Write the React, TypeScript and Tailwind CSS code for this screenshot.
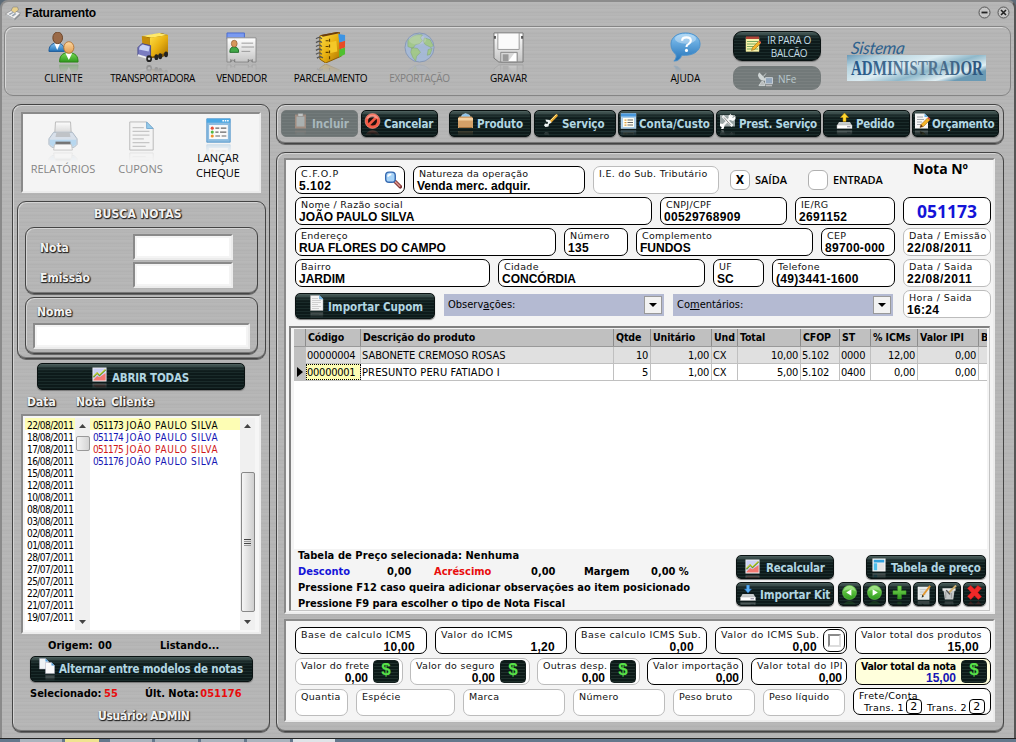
import React from 'react';

type Kids = { children?: React.ReactNode };

const tahoma = "font-['DejaVu_Sans_Condensed','DejaVu_Sans',sans-serif]";
const verdana = "font-['DejaVu_Sans',sans-serif]";
const arial = "font-['Liberation_Sans',Arial,sans-serif]";
const segoe = "font-['Open_Sans','Noto_Sans',sans-serif]";
const brushed =
  'bg-[repeating-linear-gradient(180deg,#bbbbbb_0px,#b5b5b5_1px,#b9b9b9_2px,#b0b0b0_3px,#b7b7b7_5px,#b2b2b2_7px)]';
const panel = 'rounded-[9px] border border-[#444] shadow-[inset_1px_1px_0_#d4d4d4,inset_0_-1px_0_#777,0_1px_0_#666]';

/* ---------- icons ---------- */

type IconProps = { className?: string };
const Svg = ({ className = '', children }: IconProps & Kids) => (
  <svg viewBox="0 0 32 32" className={`block shrink-0 ${className}`}>{children}</svg>
);

const Defs = () => (
  <svg className="absolute h-0 w-0" aria-hidden="true">
    <defs>
      <linearGradient id="blue" x1="0" y1="0" x2="0" y2="1"><stop offset="0" stopColor="#8cc8f4" /><stop offset="1" stopColor="#2272b8" /></linearGradient>
      <linearGradient id="green" x1="0" y1="0" x2="0" y2="1"><stop offset="0" stopColor="#7fdc58" /><stop offset="1" stopColor="#2e9a1e" /></linearGradient>
      <linearGradient id="gold" x1="0" y1="0" x2="1" y2="1"><stop offset="0" stopColor="#ffe14a" /><stop offset="0.5" stopColor="#e8b010" /><stop offset="1" stopColor="#a87000" /></linearGradient>
      <linearGradient id="silver" x1="0" y1="0" x2="0" y2="1"><stop offset="0" stopColor="#ffffff" /><stop offset="1" stopColor="#c4c4c4" /></linearGradient>
      <linearGradient id="skin" x1="0" y1="0" x2="0" y2="1"><stop offset="0" stopColor="#ffd9a0" /><stop offset="1" stopColor="#e09a50" /></linearGradient>
      <linearGradient id="plate" x1="0" y1="0" x2="1" y2="0.6"><stop offset="0" stopColor="#6a9ab8" /><stop offset="0.2" stopColor="#b4d2de" /><stop offset="0.5" stopColor="#dcecf2" /><stop offset="0.7" stopColor="#8fb8ca" /><stop offset="0.9" stopColor="#e2f0f4" /><stop offset="1" stopColor="#6b9ab4" /></linearGradient>
      <linearGradient id="ink" x1="0" y1="0" x2="1" y2="0"><stop offset="0" stopColor="#1f5488" /><stop offset="0.5" stopColor="#5e7c94" /><stop offset="1" stopColor="#28527c" /></linearGradient>
    </defs>
  </svg>
);

const Users = (p: IconProps) => (
  <Svg {...p}>
    <path d="M1 20c0-5 2-8 8-9 6 1 8 4 8 9z" fill="url(#blue)" stroke="#1c5a98" />
    <path d="M6.500 11.500L9.500 18.500 12.500 11.500z" fill="#fff" />
    <ellipse cx="10" cy="6" rx="5" ry="6" fill="#9a6a48" stroke="#6c4528" />
    <path d="M12 31c0-6 2-9 9-10 8 1 10 4 10 10z" fill="url(#green)" stroke="#2c8418" />
    <path d="M18 22l3.500 7L25 22z" fill="#fff" />
    <ellipse cx="21.500" cy="16" rx="5.200" ry="6" fill="url(#skin)" stroke="#b87838" />
  </Svg>
);
const Truck = (p: IconProps) => (
  <Svg {...p}>
    <path d="M5 5l20-4 7 2v20l-6 3-14 1z" fill="#7a5200" />
    <path d="M5 4l18-3 9 2-17 3z" fill="#ffe96a" />
    <path d="M13 6l19-3v18l-19 5z" fill="url(#gold)" />
    <path d="M5 4l8 2v18L6 20z" fill="#c48c08" />
    <path d="M1 16l4-4 9 2v13L1 24z" fill="#7a7cc0" stroke="#46488c" />
    <path d="M3 15l3-2 7 2-1 5-10-2z" fill="#c8d2f4" />
    <path d="M1 23l11 3v2L1 25z" fill="#eee" />
    <g fill="#222"><ellipse cx="12.500" cy="27.500" rx="3" ry="3.500" /><ellipse cx="20" cy="26" rx="2" ry="3" /><ellipse cx="24" cy="25" rx="2" ry="3" /><ellipse cx="30" cy="23" rx="2" ry="3" /></g>
    <circle cx="12.500" cy="27.500" r="1.300" fill="#ccc" />
  </Svg>
);
const IdCard = (p: IconProps) => (
  <Svg {...p}>
    <path d="M1 1h18v6H1z" fill="#7a9af0" stroke="#4a6cd0" />
    <path d="M1 6h30v25h-4a2 2 0 1 0-4 0H9a2 2 0 1 0-4 0H1z" fill="url(#silver)" stroke="#8a8a8a" />
    <path d="M4 21c0-4 1-5 4-6 4 1 5 2 5 6z" fill="#42a848" stroke="#207028" />
    <ellipse cx="8.500" cy="12" rx="3" ry="3.500" fill="#d8975c" stroke="#8e5a30" strokeWidth=".7" />
    <path d="M16 11.500h12M16 15.500h13M16 20h9" stroke="#999" />
    <path d="M5 28v3M9 28v3M23 28v3M27 28v3" stroke="#777" />
  </Svg>
);
const Notebook = (p: IconProps) => (
  <Svg {...p}>
    <path d="M5 4l20-4 2 25-16 7-6-4z" fill="url(#gold)" stroke="#8a5c00" />
    <path d="M6 3l17-3 3 1-18 4z" fill="#6a3c10" />
    <path d="M24 2l7 1v6l-6 2z" fill="#3c94e4" /><path d="M25 11l6-2v7l-6 2z" fill="#e84c24" /><path d="M25 18l6-2v7l-6 3z" fill="#50c030" />
    <path d="M14 11l8-2 1 11-8 2z" fill="#f4c828" />
    <g stroke="#555" strokeWidth="1.400" fill="none"><path d="M1 7q4-3 6 0M1 11q4-3 6 0M1 15q4-3 6 0M1 19q4-3 6 0M1 23q4-3 6 0M2 27q4-3 6 0" /></g>
    <g stroke="#604000" strokeWidth="1.200"><path d="M15 7v3M15 13v3M15 19v3M15 25v3M11 9h3M11 15h3M11 21h3" /></g>
  </Svg>
);
const Globe = (p: IconProps) => (
  <Svg {...p}>
    <circle cx="16" cy="16" r="15" fill="#9cbcec" stroke="#6884b4" />
    <path d="M4 9c4-5 9-7 15-6l-2 3 2 3-3 3-4 1-3 4-5-2zM8 16l6 1 3 4-4 4-1 5-3-4-2-5zM21 6l6 2 3 6-2 2-6-3-2-3zM25 18l4-1-2 6-3 1z" fill="#96d470" stroke="#64a050" strokeWidth=".6" />
    <ellipse cx="14" cy="8" rx="9" ry="5" fill="#fff" opacity=".25" />
  </Svg>
);
const Floppy = (p: IconProps) => (
  <Svg {...p}>
    <path d="M1 1h30v30H6l-5-4z" fill="url(#silver)" stroke="#777" />
    <path d="M5 1v17h22V1z" fill="#fafafa" stroke="#999" />
    <path d="M1 4h2v3H1zM29 4h2v3h-2z" fill="#555" />
    <path d="M8 21h17v10H8z" fill="#d8d8d8" stroke="#888" />
    <path d="M10 23h6v7h-6z" fill="#999" /><path d="M16 30l6-8h2v8z" fill="#fff" />
  </Svg>
);
const Help = (p: IconProps) => (
  <Svg {...p}>
    <path d="M16 1c9 0 15 5 15 11.500S25 24 16 24l-4 0c-1 4-4 6-8 6 2-2 3-4 2-7C3 21 1 17 1 12.500 1 6 7 1 16 1z" fill="url(#blue)" stroke="#4a92cc" />
    <ellipse cx="16" cy="7" rx="11" ry="5" fill="#fff" opacity=".35" />
    <path d="M12.500 9q0-3.500 4.500-3.500t4.500 3.500q0 2-2.500 3.500-2 1-2 3" fill="none" stroke="#fff" strokeWidth="2.200" /><circle cx="17" cy="19" r="1.600" fill="#fff" />
  </Svg>
);
const Printer = (p: IconProps) => (
  <Svg {...p}>
    <path d="M8 1h16l1 15H7z" fill="url(#silver)" stroke="#aaa" />
    <path d="M6 12h20l5 7v6l-3 3H4l-3-3v-6z" fill="#d2dce8" stroke="#98a8b8" />
    <path d="M9 12h14l1 5H8z" fill="#b4b8bc" /><path d="M2 20h28v5l-3 2H5l-3-2z" fill="#a8d0ee" />
    <path d="M8 22h16v3H8z" fill="#555" /><path d="M7 25h18l1 6H6z" fill="#fafafa" stroke="#bbb" />
  </Svg>
);
const Doc = (p: IconProps) => (
  <Svg {...p}>
    <path d="M4 1h18l7 7v23H4z" fill="#f4f4f4" stroke="#aaa" />
    <path d="M22 1v7h7z" fill="#7cc0ea" stroke="#5898c8" />
    <path d="M7 7h12M7 11h18M7 15h18M7 19h12M7 23h18M7 27h14" stroke="#bbb" strokeWidth="1.300" />
  </Svg>
);
const WinList = (p: IconProps) => (
  <Svg {...p}>
    <path d="M1 1h30v30H1z" fill="#8cbce0" stroke="#4a90c8" /><path d="M1 1h30v5H1z" fill="#4aa8e4" />
    <path d="M21 3.500h8" stroke="#fff" strokeWidth="2" strokeDasharray="2 1" /><path d="M4 9h24v18H4z" fill="#fafafa" />
    <circle cx="8" cy="13" r="2" fill="#e45038" /><circle cx="8" cy="18" r="2" fill="#50b840" /><circle cx="8" cy="23" r="2" fill="#f09028" />
    <path d="M12 13h5M19 13h7M12 18h4M18 18h8M12 23h6M20 23h6" stroke="#666" strokeWidth="1.500" />
  </Svg>
);
const ListWin = (p: IconProps) => (
  <Svg {...p}>
    <path d="M1 1h30v30H1z" fill="#a8cce8" stroke="#c8e0f4" /><path d="M1 1h30v6H1z" fill="#4898dc" />
    <path d="M5 10h22v18H5z" fill="#fffef2" />
    <path d="M8 14h4M8 19h4M8 24h4" stroke="#e0a040" strokeWidth="2.500" /><path d="M14 14h11M14 19h11M14 24h11" stroke="#666" strokeWidth="2" />
  </Svg>
);
const Clipboard = (p: IconProps) => (
  <Svg {...p}>
    <path d="M5 3h22v28H5z" fill="#a08c80" /><path d="M8 7h16v20H8z" fill="#aab0b0" /><path d="M11 1h10v6H11z" fill="#c0c4c4" stroke="#888" />
  </Svg>
);
const Ban = (p: IconProps) => (
  <Svg {...p}>
    <circle cx="16" cy="16" r="15" fill="#f45a44" stroke="#fbb0a4" /><circle cx="16" cy="16" r="9" fill="#20100e" />
    <path d="M8 24L24 8" stroke="#f45a44" strokeWidth="5" /><path d="M4 12q2-9 12-9t12 9q-12-6-24 0z" fill="#fff" opacity=".35" />
  </Svg>
);
const Bag = (p: IconProps) => (
  <Svg {...p}>
    <path d="M7 10L9 4l7-3 8 3 2 6z" fill="#8cc4ec" stroke="#d0e8f8" /><path d="M1 10l3-3h24l3 3v20H1z" fill="#d4a068" />
    <path d="M1 10h30v5H1z" fill="#f4d0a0" /><path d="M3 29h26" stroke="#a87440" strokeWidth="2" />
  </Svg>
);
const Wrench = (p: IconProps) => (
  <Svg {...p}>
    <path d="M15 18L28 5" stroke="#e8a830" strokeWidth="5" strokeLinecap="round" /><path d="M16 15L28 3" stroke="#ffe48c" strokeWidth="2" />
    <path d="M18 19l-4-5-8-1 1 4 4 1-1 4-5-1-2 4 3 3 6-1 1-5z" fill="#f0f4f4" />
  </Svg>
);
const Tools = (p: IconProps) => (
  <Svg {...p}>
    <path d="M1 4h30v23H1z" fill="#9aa4a4" /><path d="M4 28L26 5M6 6l20 20" stroke="#f4f4f4" strokeWidth="5" />
    <path d="M23 1l-1 6 5 3 5-4v6l-5 4-8-3-1-7zM1 21l6 1 3 4-2 6H3l2-5-4-1z" fill="#fff" /><path d="M9 9l13 15" stroke="#666" strokeWidth="1.500" />
  </Svg>
);
const Drive = ({ down, ...p }: IconProps & { down?: boolean }) => (
  <Svg {...p}>
    <path d="M5 18h22l4 7H1z" fill="#c8cccc" /><path d="M1 24h30v7H1z" fill="#fff" stroke="#aaa" /><path d="M21 27.500h7" stroke="#889" strokeWidth="2" />
    {down ? <path d="M13 0h6v8h4l-7 8-7-8h4z" fill="#5ab0f4" stroke="#2468b4" /> : <path d="M13 17h6V9h5L16 0 8 9h5z" fill="#ffd830" stroke="#c88c00" />}
  </Svg>
);
const DriveDown = (p: IconProps) => <Drive down {...p} />;
const DocPencil = (p: IconProps) => (
  <Svg {...p}>
    <path d="M1 1h19l7 7v23H1z" fill="#f6f6f6" /><path d="M20 1v7h7z" fill="#64b0e8" />
    <path d="M5 8h12M5 13h14M5 18h10M5 23h8" stroke="#a4a8ac" strokeWidth="2" />
    <path d="M11 29l2-6L26 10l5 4-13 13z" fill="#f4b428" stroke="#8c5c10" /><path d="M11 29l2-6 4 4z" fill="#5c2c10" /><path d="M26 10l2-2 4 4-1 2z" fill="#e85848" />
  </Svg>
);
const PadPencil = (p: IconProps) => (
  <Svg {...p}>
    <path d="M2 3h26v28H2z" fill="#f8f4ac" stroke="#dad48c" /><path d="M2 1h26v5H2z" fill="#b04438" /><path d="M4 11h22M4 16h22M4 21h22M4 26h22" stroke="#78a860" strokeWidth="2" />
    <path d="M13 29l2-6L27 11l4 4-12 12z" fill="#f4b428" stroke="#8c5c10" /><path d="M27 11l2-2 4 4-2 2z" fill="#e85848" />
  </Svg>
);
const Chart = (p: IconProps) => (
  <Svg {...p}>
    <path d="M1 1h30v30H1z" fill="#eef0f4" /><path d="M3 3h26v24H3z" fill="#ccd0f4" /><path d="M3 27l8-8 5 3 13-9v16H3z" fill="#f47870" />
    <path d="M3 22l8-9 5 5L29 6" fill="none" stroke="#6c9820" strokeWidth="3" /><path d="M3 19l8-7 5 4L28 5" fill="none" stroke="#e4e440" strokeWidth="2" />
  </Svg>
);
const Docs = (p: IconProps) => (
  <Svg {...p}>
    <path d="M1 1h12l6 6v15H1z" fill="#eef2f4" stroke="#aab" /><path d="M13 1v6h6z" fill="#4c9cdc" />
    <path d="M13 9h12l6 6v16H13z" fill="#fafafa" stroke="#aab" /><path d="M25 9v6h6z" fill="#4c9cdc" />
  </Svg>
);
const Layout = (p: IconProps) => (
  <Svg {...p}>
    <path d="M1 1h30v30H1z" fill="#f4f4f4" /><path d="M4 4h24v6H4z" fill="#30a0dc" /><path d="M4 12h8v16H4z" fill="#50c0ec" /><path d="M14 12h14v16H14z" fill="#e4e4e4" />
  </Svg>
);
const Arrow = ({ left, ...p }: IconProps & { left?: boolean }) => (
  <Svg {...p}>
    <circle cx="16" cy="16" r="15" fill="url(#green)" stroke="#80e060" />
    {left ? <path d="M20 9v14L9 16z" fill="#fff" /> : <path d="M12 9v14l11-7z" fill="#fff" />}
    <path d="M3 13Q6 2 16 2t13 11Q16 6 3 13z" fill="#fff" opacity=".3" />
  </Svg>
);
const ArrowLeft = (p: IconProps) => <Arrow left {...p} />;
const Plus = (p: IconProps) => (
  <Svg {...p}><path d="M12 2h8v10h10v8H20v10h-8V20H2v-8h10z" fill="url(#green)" stroke="#3a9c20" /></Svg>
);
const Cross = (p: IconProps) => (
  <Svg {...p}><path d="M8 1l8 8 7-8 8 6-8 9 8 9-7 6-8-8-8 8-7-7 8-8-8-9z" fill="#ee2828" stroke="#d01010" /></Svg>
);
const NoteEdit = (p: IconProps) => (
  <Svg {...p}><path d="M2 4h24v27H2z" fill="#e4e8e8" stroke="#fff" /><path d="M6 10h14M6 15h14M6 20h12" stroke="#b4b8b8" strokeWidth="1.500" /><path d="M12 23L28 2" stroke="#e49830" strokeWidth="4" /><path d="M10 27l1-6 4 3z" fill="#332" /></Svg>
);
const PotEdit = (p: IconProps) => (
  <Svg {...p}><path d="M3 10h24l-3 21H6z" fill="#c4c8c8" /><path d="M1 7h28v5H1z" fill="#e8e8e8" /><path d="M8 15v13M20 17v11" stroke="#999" strokeWidth="2" /><path d="M15 16L30 1" stroke="#d0b070" strokeWidth="4" /><path d="M9 11l8 9" stroke="#555" strokeWidth="3" /></Svg>
);
const Magnifier = (p: IconProps) => (
  <Svg {...p}>
    <path d="M20 19l9 9" stroke="#7c3030" strokeWidth="6.500" strokeLinecap="round" /><path d="M20 19l8 8" stroke="#d89088" strokeWidth="3" strokeLinecap="round" />
    <rect x="3" y="2" width="17" height="18" rx="6" fill="#a8d4f8" stroke="#3468b0" strokeWidth="2.500" /><path d="M7 10q1-4 6-4" stroke="#fff" strokeWidth="3" fill="none" />
  </Svg>
);
const Dish = (p: IconProps) => (
  <Svg {...p}>
    <path d="M3 1l15 16Q9 22 3 14T3 1z" fill="#cfd5d5" /><path d="M11 10l6-7M8 20l-6 9h13l-3-8z" stroke="#cfd5d5" strokeWidth="2" fill="#b8bcbc" />
    <path d="M16 12h15v13H16z" fill="#94a8be" stroke="#ccd2d6" strokeWidth="2" /><path d="M17 29h13" stroke="#bbb" strokeWidth="3" />
  </Svg>
);
const Register = (p: IconProps) => (
  <Svg {...p}>
    <path d="M1 18l13-8 17 6-12 12z" fill="#f2f2f2" stroke="#777" /><path d="M2 19l17 8v4L2 23z" fill="#b8babc" /><path d="M19 27l11-10v4L19 31z" fill="#8c9094" />
    <path d="M12 11l4-7h9l2 6-8 6z" fill="#e8d08c" stroke="#777" /><path d="M7 18l8-4 3 1-8 5zM13 21l7-5 3 2-7 5z" fill="#98a4b0" />
  </Svg>
);

/* ---------- building blocks ---------- */

const Mirrored = ({ icon: Icon, size, tail, dim }: { icon: React.FC<IconProps>; size: string; tail: string; dim?: string }) => (
  <div className={`flex flex-col items-center ${dim ?? ''}`}>
    <Icon className={size} />
    <div className={`mt-px overflow-hidden opacity-30 mask-[linear-gradient(#000,transparent)] ${tail}`}>
      <div className="-scale-y-100"><Icon className={size} /></div>
    </div>
  </div>
);

const TopItem = ({ icon, label, muted, tracking = '' }: { icon: React.FC<IconProps>; label: string; muted?: boolean; tracking?: string }) => (
  <div className="flex w-[89px] shrink-0 flex-col items-center">
    <Mirrored icon={icon} size="h-[31px] w-[31px]" tail="h-[10px]" dim={muted ? 'opacity-60' : ''} />
    <span className={`${segoe} -mt-[2px] text-[10px] leading-3 whitespace-nowrap ${tracking} ${muted ? 'text-[#808080]' : 'text-black'}`}>{label}</span>
  </div>
);

const glossy =
  'bg-[linear-gradient(180deg,rgba(150,175,170,0.5)_0px,rgba(60,80,78,0.35)_4px,transparent_8px),repeating-linear-gradient(180deg,#0d1a1a_0px,#0d1a1a_2px,#1a2b2a_2px,#1a2b2a_3px)] border border-[#0a1212] shadow-[0_1px_1px_#777]';

const DarkButton = ({ className = '', icon, iconClass = 'h-[16px] w-[17px]', drop = 'pt-[2px]', label, muted, textClass = '' }: {
  className?: string; icon: React.FC<IconProps>; iconClass?: string; drop?: string; label: string; muted?: boolean; textClass?: string;
}) => (
  <button className={`flex shrink-0 items-center overflow-hidden rounded-[5px] ${muted ? 'border border-[#747a7a] bg-[repeating-linear-gradient(180deg,#6b7373_0px,#6b7373_2px,#727a7a_2px,#727a7a_3px)]' : glossy} ${className}`}>
    <span className={`block self-start ${drop}`}><Mirrored icon={icon} size={iconClass} tail="h-[6px]" /></span>
    <span className={`${tahoma} font-bold whitespace-nowrap ${muted ? 'text-[#a8b8bc]' : 'text-[#b2d6e2]'} text-[11.5px] leading-4 ${textClass}`}>{label}</span>
  </button>
);

const SquareButton = ({ icon }: { icon: React.FC<IconProps> }) => (
  <button className={`flex h-6 w-[23px] shrink-0 items-start justify-center overflow-hidden rounded-[5px] pt-[2px] ${glossy}`}>
    <Mirrored icon={icon} size="h-[15px] w-[15px]" tail="h-[5px]" />
  </button>
);

const Field = ({ label, value, className, soft, extra, labelClass = 'tracking-[0.3px]', valueClass = '', align = '' }: {
  label?: string; value?: string; className: string; soft?: boolean; extra?: React.ReactNode; labelClass?: string; valueClass?: string; align?: string;
}) => (
  <div className={`relative flex shrink-0 flex-col rounded-[7px] border bg-white pt-px pl-[3px] ${soft ? 'border-[#bcbcbc]' : 'border-black'} ${className}`}>
    <span className={`${verdana} pl-[2px] text-[9.5px] leading-[12px] whitespace-nowrap text-[#111] ${labelClass}`}>{label}</span>
    <span className={`${arial} text-[12px] leading-[12px] font-bold whitespace-nowrap text-black ${align} ${valueClass}`}>{value}</span>
    {extra}
  </div>
);

const Check = ({ mark }: { mark?: string }) => (
  <div className={`flex h-5 w-5 shrink-0 items-center justify-center rounded-[6px] border border-[#b0b0b0] bg-white ${tahoma} text-[12px] font-bold`}>{mark}</div>
);

const Combo = ({ before, hot, after, className }: { before: string; hot: string; after: string; className: string }) => (
  <div className={`flex h-[22px] shrink-0 items-center justify-between bg-[#b4bad2] pr-[2px] pl-1 ${className}`}>
    <span className={`${tahoma} text-[11px]`}>{before}<u>{hot}</u>{after}</span>
    <div className="flex h-[18px] w-[18px] items-center justify-center border border-[#999] bg-[#f2f2f2]">
      <svg viewBox="0 0 8 4" className="h-1 w-2"><path d="M0 0h8L4 4z" /></svg>
    </div>
  </div>
);

const Inset = ({ className = '', children }: { className?: string } & Kids) => (
  <div className={`border-2 border-t-[#8a8a8a] border-r-[#ececec] border-b-[#ececec] border-l-[#8a8a8a] ${className}`}>{children}</div>
);

const Etched = ({ children, className = '' }: { className?: string } & Kids) => (
  <span className={`${tahoma} font-bold whitespace-nowrap text-[#f2f2f2] text-[12px] leading-4 [text-shadow:1px_1px_1px_#222,1px_0_1px_#444,0_1px_1px_#444] ${className}`}>{children}</span>
);

const SearchInput = ({ className }: { className: string }) => (
  <Inset className={`bg-[#f4f4f4] p-[2px] ${className}`}><input className="block h-full w-full bg-white" /></Inset>
);

const ScrollArrow = ({ up }: { up?: boolean }) => (
  <svg viewBox="0 0 7 4" className="h-1 w-[7px]">{up ? <path d="M0 4h7L3.500 0z" fill="#444" /> : <path d="M0 0h7L3.500 4z" fill="#444" />}</svg>
);

/* ---------- left column ---------- */

const dates = ['22/08/2011', '18/08/2011', '17/08/2011', '16/08/2011', '15/08/2011', '12/08/2011', '10/08/2011', '08/08/2011', '03/08/2011', '02/08/2011', '01/08/2011', '28/07/2011', '27/07/2011', '25/07/2011', '22/07/2011', '21/07/2011', '19/07/2011'];
const invoices = [
  { n: '051173', tone: 'bg-[#fdfdb4] text-black' },
  { n: '051174', tone: 'text-[#1414b4]' },
  { n: '051175', tone: 'text-[#d01818]' },
  { n: '051176', tone: 'text-[#1414b4]' },
];

const SmallItem = ({ icon, label, muted, size, className, textClass }: { icon: React.FC<IconProps>; label: React.ReactNode; muted?: boolean; size: string; className: string; textClass: string }) => (
  <div className={`flex flex-col items-center ${className}`}>
    <Mirrored icon={icon} size={size} tail="h-[10px]" dim={muted ? 'opacity-80' : ''} />
    <span className={`${segoe} text-center text-[11px] leading-[15px] whitespace-nowrap ${textClass} ${muted ? 'text-[#858585]' : 'text-black'}`}>{label}</span>
  </div>
);

const LeftColumn = () => (
  <aside className={`flex h-[628px] w-[258px] shrink-0 flex-col pl-2 ${panel}`}>
    <Inset className="mt-[7px] flex h-[81px] w-[240px] shrink-0 bg-[#f4f4f4]">
      <SmallItem icon={Printer} label="RELATÓRIOS" muted size="h-[30px] w-[30px]" className="ml-px w-[78px] pt-[7px]" textClass="-mt-px" />
      <SmallItem icon={Doc} label="CUPONS" muted size="h-[30px] w-[30px]" className="w-[77px] pt-[7px]" textClass="-mt-px" />
      <SmallItem icon={WinList} label={<>LANÇAR<br />CHEQUE</>} size="h-[25px] w-[25px]" className="w-[78px] pt-[4px]" textClass="-mt-[4px]" />
    </Inset>

    <section className={`-ml-[4px] mt-2 flex h-[158px] w-[249px] shrink-0 flex-col pl-[7px] ${panel}`}>
      <Etched className="mt-1 h-[21px] pl-[69px] tracking-[0.2px]">BUSCA NOTAS</Etched>
      <div className={`flex h-[67px] w-[233px] shrink-0 flex-col pl-[14px] ${panel}`}>
        <div className="mt-[6px] flex items-center">
          <Etched className="w-[93px] pt-[2px]">Nota</Etched>
          <SearchInput className="h-[26px] w-[100px]" />
        </div>
        <div className="mt-[2px] flex items-center">
          <Etched className="w-[93px] pt-[5px]">Emissão</Etched>
          <SearchInput className="h-[26px] w-[100px]" />
        </div>
      </div>
      <div className={`mt-[3px] flex h-[57px] w-[233px] shrink-0 flex-col pl-[7px] ${panel}`}>
        <Etched className="mt-[6px] pl-[4px]">Nome</Etched>
        <SearchInput className="mt-[3px] h-[26px] w-[217px]" />
      </div>
    </section>

    <DarkButton className="mt-1 ml-4 h-[27px] w-[208px] pl-[54px]" icon={Chart} iconClass="h-[15px] w-[15px]" drop="pt-[3px]" label="ABRIR TODAS" textClass="pl-[5px] pt-[2px] tracking-[-0.2px]" />
    <div className="mt-1 flex h-[19px] pl-[6px]">
      <Etched className="w-[49px]">Data</Etched><Etched className="w-[35px]">Nota</Etched><Etched>Cliente</Etched>
    </div>

    <Inset className={`mt-px flex h-[220px] w-[240px] shrink-0 bg-[#f6f6f6] p-[2px] ${tahoma} text-[10px] leading-[15px]`}>
      <ul className="w-[50px] bg-white">
        {dates.map((d, i) => (
          <li key={d} className={`pl-[2px] tracking-[-0.55px] whitespace-nowrap ${i === 0 ? 'h-3 bg-[#fdfdb4]' : 'h-3'}`}>{d}</li>
        ))}
      </ul>
      <div className="flex w-[15px] flex-col items-center bg-[#f0f0f0] py-[6px]">
        <ScrollArrow up />
        <div className="mt-[8px] h-[15px] w-[14px] rounded-[2px] border border-[#999] bg-gradient-to-r from-[#f4f4f4] to-[#d4d4d4]" />
        <div className="mt-auto"><ScrollArrow /></div>
      </div>
      <ul className="w-[150px] bg-white">
        {invoices.map((v) => (
          <li key={v.n} className={`h-3 pl-[3px] whitespace-nowrap ${v.tone}`}>
            <span className="tracking-[-0.7px]">{v.n} </span><span className="pl-px tracking-[0.65px]">JOÃO PAULO SILVA</span>
          </li>
        ))}
      </ul>
      <div className="flex w-[15px] flex-col items-center bg-[#f0f0f0] py-[6px]">
        <ScrollArrow up />
        <div className="mt-[44px] flex h-[140px] w-[14px] flex-col items-center justify-center gap-px rounded-[2px] border border-[#888] bg-gradient-to-r from-[#f6f6f6] to-[#cfcfcf]">
          <i className="h-px w-[7px] bg-[#444]" /><i className="h-px w-[7px] bg-[#999]" /><i className="h-px w-[7px] bg-[#444]" /><i className="h-px w-[7px] bg-[#999]" />
        </div>
        <div className="mt-auto"><ScrollArrow /></div>
      </div>
    </Inset>

    <div className={`mt-1 flex h-4 pl-[27px] ${tahoma} text-[11px] leading-4 font-bold whitespace-nowrap`}>
      <span className="w-[50px]">Origem:</span><span className="w-[62px]">00</span><span>Listando...</span>
    </div>
    <DarkButton className="mt-[2px] ml-[9px] h-[26px] w-[223px] pl-2" icon={Docs} iconClass="h-4 w-4" drop="pt-px" label="Alternar entre modelos de notas" textClass="pl-1 tracking-[-0.2px]" />
    <div className={`mt-1 flex h-4 pl-[9px] ${tahoma} text-[11px] leading-4 font-bold whitespace-nowrap`}>
      <span className="w-[115px]">Selecionado: <b className="-ml-px text-[#e80c0c]">55</b></span>
      <span>Últ. Nota: <b className="-ml-[2px] text-[#e80c0c]">051176</b></span>
    </div>
    <Etched className="mt-[6px] pl-[77px] text-[11px] tracking-[-0.3px]">Usuário: ADMIN</Etched>
  </aside>
);

/* ---------- items table ---------- */

const columns = [
  { title: '', w: 'w-[12px]', a: '' }, { title: 'Código', w: 'w-[55px]', a: '' }, { title: 'Descrição do produto', w: 'w-[253px]', a: '' },
  { title: 'Qtde', w: 'w-[37px]', a: 'text-right' }, { title: 'Unitário', w: 'w-[61px]', a: 'text-right' }, { title: 'Und', w: 'w-[26px]', a: '' },
  { title: 'Total', w: 'w-[63px]', a: 'text-right' }, { title: 'CFOP', w: 'w-[39px]', a: '' }, { title: 'ST', w: 'w-[31px]', a: '' },
  { title: '% ICMs', w: 'w-[47px]', a: 'text-right' }, { title: 'Valor IPI', w: 'w-[61px]', a: 'text-right' }, { title: 'B', w: 'w-[8px]', a: '' },
];
const rows = [
  ['', '00000004', 'SABONETE CREMOSO ROSAS', '10', '1,00', 'CX', '10,00', '5.102', '0000', '12,00', '0,00', ''],
  ['▶', '00000001', 'PRESUNTO PERU FATIADO I', '5', '1,00', 'CX', '5,00', '5.102', '0400', '0,00', '0,00', ''],
];

const Items = () => (
  <div className={`w-[693px] overflow-hidden ${tahoma} text-[11px] whitespace-nowrap`}>
    <div className="flex h-[18px] border-b border-[#999] bg-[#c0c0c0] leading-4 font-bold">
      {columns.map((c) => <div key={c.title} className={`${c.w} shrink-0 overflow-hidden border-r border-[#8c8c8c] pl-[2px] text-[10.500px] tracking-[-0.1px] last:border-r-0`}>{c.title}</div>)}
    </div>
    {rows.map((r, y) => (
      <div key={r[1]} className={`flex h-[17px] border-b border-[#c0c0c0] leading-[17px] ${y === 0 ? 'bg-[#e0e0e0]' : 'bg-white'}`}>
        {r.map((t, x) => (
          <div key={x} className={`${columns[x].w} ${columns[x].a} shrink-0 overflow-hidden border-r border-[#c0c0c0] last:border-r-0 ${x === 0 ? 'bg-[#c0c0c0]' : 'pl-px pr-[2px]'} ${x === 2 ? (y === 0 ? 'tracking-[-0.05px]' : 'tracking-[0.15px]') : 'tracking-[-0.25px]'} ${x === 1 && y === 1 ? '-outline-offset-1 bg-[#fdfdb4] outline outline-dotted outline-black' : ''}`}>
            {x === 0 && t ? <svg viewBox="0 0 6 10" className="mt-[3px] ml-[3px] h-[10px] w-[6px]"><path d="M0 0l6 5-6 5z" /></svg> : t}
          </div>
        ))}
      </div>
    ))}
  </div>
);

/* ---------- invoice form ---------- */

const Dollar = () => (
  <span className="absolute top-px right-[3px] flex h-[23px] w-[26px] items-start justify-center rounded-[4px] border border-[#14201e] bg-[repeating-linear-gradient(180deg,#0c1a18_0px,#0c1a18_2px,#1f302c_2px,#1f302c_3px)] font-['Liberation_Sans',sans-serif] text-[17px] leading-[17px] font-bold text-[#58e048]">$</span>
);

const Money = ({ label, value, className }: { label: string; value: string; className: string }) => (
  <Field soft label={label} value={value} className={`h-[27px] ${className}`} align="text-right pr-[34px]" extra={<Dollar />} />
);

const UpperForm = () => (
  <div className="flex pl-[9px]">
    <div className="w-[608px] pt-[6px]">
      <div className="flex h-[31px] gap-2">
        <Field label="C.F.O.P" value="5.102" className="h-7 w-[110px]" valueClass="tracking-[0.5px]" labelClass="tracking-[0.8px]" extra={<Magnifier className="absolute top-[4px] right-[2px] h-[18px] w-[18px]" />} />
        <Field label="Natureza da operação" value="Venda merc. adquir." className="h-7 w-[172px]" labelClass="tracking-[0.2px]" />
        <Field soft label="I.E. do Sub. Tributário" className="h-7 w-[126px]" />
        <div className={`flex h-7 items-center pl-[3px] ${segoe} text-[11px] font-semibold`}>
          <Check mark="X" /><span className="w-[58px] pl-[5px]">SAÍDA</span>
          <Check /><span className="pl-[5px] tracking-[-0.15px]">ENTRADA</span>
        </div>
      </div>
      <div className="flex h-[31px] gap-2">
        <Field label="Nome / Razão social" value="JOÃO PAULO SILVA" className="h-7 w-[357px]" />
        <Field label="CNPJ/CPF" value="00529768909" className="h-7 w-[127px]" valueClass="tracking-[0.3px]" />
        <Field label="IE/RG" value="2691152" className="h-7 w-[100px]" valueClass="tracking-[0.3px]" />
      </div>
      <div className="flex h-[31px] gap-2">
        <Field label="Endereço" value="RUA FLORES DO CAMPO" className="h-7 w-[261px]" />
        <Field label="Número" value="135" className="h-7 w-[64px]" valueClass="tracking-[0.3px]" />
        <Field label="Complemento" value="FUNDOS" className="h-7 w-[177px]" />
        <Field label="CEP" value="89700-000" className="h-7 w-[74px]" valueClass="tracking-[0.3px]" />
      </div>
      <div className="flex h-[31px] gap-2">
        <Field label="Bairro" value="JARDIM" className="h-7 w-[195px]" />
        <Field label="Cidade" value="CONCÓRDIA" className="h-7 w-[207px]" />
        <Field label="UF" value="SC" className="h-7 w-[51px]" />
        <Field label="Telefone" value="(49)3441-1600" className="h-7 w-[123px]" valueClass="tracking-[0.3px]" />
      </div>
      <div className="flex pt-[3px]">
        <DarkButton className="h-[26px] w-[140px] pl-3" icon={Doc} drop="pt-px" label="Importar Cupom" textClass="pl-[3px] pt-[2px]" />
        <Combo before="Observ" hot="a" after="ções:" className="mt-[1px] ml-[9px] w-[220px]" />
        <Combo before="Co" hot="m" after="entários:" className="mt-[1px] ml-[9px] w-[220px]" />
      </div>
    </div>
    <div className="flex w-[88px] flex-col gap-[3px]">
      <h2 className={`h-[34px] pl-[10px] ${segoe} text-[14px] leading-[18px] font-bold whitespace-nowrap`}>Nota Nº</h2>
      <div className={`flex h-7 items-center justify-center rounded-[7px] border border-black bg-white ${segoe} text-[17.5px] font-bold text-[#1414d8]`}>051173</div>
      <Field soft label="Data / Emissão" value="22/08/2011" className="h-7" valueClass="tracking-[0.6px]" labelClass="tracking-[0.45px]" />
      <Field soft label="Data / Saida" value="22/08/2011" className="h-7" valueClass="tracking-[0.6px]" labelClass="tracking-[0.45px]" />
      <Field soft label="Hora / Saida" value="16:24" className="h-7" valueClass="tracking-[0.3px]" labelClass="tracking-[0.4px]" />
    </div>
  </div>
);

const TableFooter = () => (
  <div className={`flex pl-[4px] ${tahoma} text-[11px] leading-4 font-bold whitespace-nowrap`}>
    <div className="-mt-px w-[438px]">
      <p className="tracking-[0.08px]">Tabela de Preço selecionada: Nenhuma</p>
      <p className="flex">
        <span className="w-[89px] text-[#1414d8]">Desconto</span><span className="w-[47px]">0,00</span>
        <span className="w-[97px] text-[#e80c0c]">Acréscimo</span><span className="w-[53px]">0,00</span>
        <span className="w-[67px]">Margem</span><span>0,00 %</span>
      </p>
      <p className="tracking-[0.02px]">Pressione F12 caso queira adicionar observações ao item posicionado</p>
      <p className="tracking-[-0.05px]">Pressione F9 para escolher o tipo de Nota Fiscal</p>
    </div>
    <div className="w-[250px] pt-[6px]">
      <div className="flex justify-between">
        <DarkButton className="h-6 w-[98px] pl-2" icon={Chart} iconClass="h-[15px] w-[15px]" drop="pt-[3px]" label="Recalcular" textClass="pl-[6px] pt-[2px] tracking-[-0.2px]" />
        <DarkButton className="h-6 w-[120px] pl-[5px]" icon={Layout} iconClass="h-[14px] w-[14px]" drop="pt-[2px]" label="Tabela de preço" textClass="pl-[5px] pt-[2px] tracking-[-0.15px]" />
      </div>
      <div className="mt-[3px] flex gap-[2px]">
        <DarkButton className="mr-[2px] h-6 w-[98px] pl-[3px]" icon={DriveDown} iconClass="h-[16px] w-[16px]" label="Importar Kit" textClass="pl-1 pt-[2px] tracking-[-0.1px]" />
        <SquareButton icon={ArrowLeft} /><SquareButton icon={Arrow} /><SquareButton icon={Plus} />
        <SquareButton icon={NoteEdit} /><SquareButton icon={PotEdit} /><SquareButton icon={Cross} />
      </div>
    </div>
  </div>
);

const MiniCode = ({ className = '' }: { className?: string }) => (
  <span className={`flex h-[15px] w-4 items-center justify-center rounded-[4px] border border-black bg-white text-[11px] ${className}`}>2</span>
);

const Totals = () => (
  <Inset className="flex h-[103px] w-[711px] shrink-0 flex-col gap-1 bg-[#f4f4f4] pt-[6px] pl-[9px]">
    <div className="flex gap-2">
      <Field label="Base de calculo ICMS" value="10,00" className="h-[27px] w-[132px]" align="text-right pr-[11px]" labelClass="tracking-[0.45px]" valueClass="tracking-[0.3px]" />
      <Field label="Valor do ICMS" value="1,20" className="h-[27px] w-[132px]" align="text-right pr-[11px]" labelClass="tracking-[0.5px]" valueClass="tracking-[0.3px]" />
      <Field label="Base calculo ICMS Sub." value="0,00" className="h-[27px] w-[132px]" align="text-right pr-[12px]" labelClass="tracking-[0.45px]" valueClass="tracking-[0.3px]" />
      <Field label="Valor do ICMS Sub." value="0,00" className="h-[27px] w-[132px]" align="text-right pr-[29px]" labelClass="tracking-[0.5px]" valueClass="tracking-[0.3px]"
        extra={<span className="absolute top-px right-px flex h-[23px] w-[22px] items-center justify-center rounded-[7px] border border-black"><span className="h-[13px] w-[13px] border-2 border-t-[#8a8a8a] border-r-[#ddd] border-b-[#ddd] border-l-[#8a8a8a] bg-white" /></span>} />
      <Field label="Valor total dos produtos" value="15,00" className="h-[27px] w-[136px]" align="text-right pr-[11px]" valueClass="tracking-[0.3px]" />
    </div>
    <div className="flex">
      <Money label="Valor do frete" value="0,00" className="w-[108px]" />
      <Money label="Valor do seguro" value="0,00" className="ml-[7px] w-[120px]" />
      <Money label="Outras desp." value="0,00" className="ml-[7px] w-[103px]" />
      <Field label="Valor importação" value="0,00" className="ml-[7px] h-[27px] w-[96px]" align="text-right pr-[3px]" />
      <Field label="Valor total do IPI" value="0,00" className="ml-2 h-[27px] w-[96px]" align="text-right pr-[4px]" labelClass="tracking-[0.45px]" />
      <div className={`relative ml-2 h-[27px] w-[136px] rounded-[7px] border border-black bg-[#ffffdc] pt-px pl-[5px] ${tahoma} text-[10.5px] leading-3 font-bold whitespace-nowrap`}>
        <p className="tracking-[-0.25px]">Valor total da nota</p>
        <p className={`${arial} pr-[34px] text-right text-[12px] text-[#1414b4]`}>15,00</p>
        <Dollar />
      </div>
    </div>
    <div className="flex gap-2">
      <Field soft label="Quantia" className="h-[27px] w-[53px]" />
      <Field soft label="Espécie" className="h-[27px] w-[99px]" />
      <Field soft label="Marca" className="h-[27px] w-[102px]" />
      <Field soft label="Número" className="h-[27px] w-[92px]" />
      <Field soft label="Peso bruto" className="h-[27px] w-[82px]" />
      <Field soft label="Peso líquido" className="h-[27px] w-[82px]" />
      <div className={`-mt-px h-[27px] w-[138px] rounded-[7px] border border-black bg-white pt-px pl-[5px] ${verdana} text-[9.5px] leading-3 tracking-[0.35px] whitespace-nowrap`}>
        <p>Frete/Conta</p>
        <p className="-mt-[3px] flex items-start pl-[5px]">
          <span className="w-[42px] pt-[3px]">Trans. 1</span><MiniCode className="mr-[5px]" />
          <span className="w-[42px] pt-[3px]">Trans. 2</span><MiniCode />
        </p>
      </div>
    </div>
  </Inset>
);

/* ---------- window ---------- */

const Logo = () => (
  <svg viewBox="0 0 142 50" className="mt-[10px] ml-[25px] h-[50px] w-[142px] shrink-0 overflow-visible">
    <rect x="1" y="18" width="139" height="26" fill="url(#plate)" />
    <text x="5" y="17" transform="skewX(-8) translate(2 0)" className="fill-[#2e628e] font-['Lato',sans-serif] text-[17px] tracking-[-0.3px] italic">Sistema</text>
    <text transform="translate(5 38) scale(0.752 1)" fill="url(#ink)" className="font-['Liberation_Serif',serif] text-[20px] font-bold">ADMINISTRADOR</text>
  </svg>
);

const Header = () => (
  <header className="ml-[2px] flex h-[70px] w-[1007px] shrink-0 rounded-[9px] border border-[#858585] pl-[14px] shadow-[inset_1px_1px_0_#d8d8d8]">
    <div className="flex w-[711px] pt-[5px]">
      <TopItem icon={Users} label="CLIENTE" /><TopItem icon={Truck} label="TRANSPORTADORA" tracking="tracking-[-0.4px]" /><TopItem icon={IdCard} label="VENDEDOR" tracking="tracking-[-0.3px]" />
      <TopItem icon={Notebook} label="PARCELAMENTO" tracking="tracking-[-0.3px]" /><TopItem icon={Globe} label="EXPORTAÇÃO" tracking="tracking-[-0.3px]" muted /><TopItem icon={Floppy} label="GRAVAR" tracking="tracking-[-0.2px]" />
      <div className="ml-auto"><TopItem icon={Help} label="AJUDA" /></div>
    </div>
    <div className="ml-[3px] flex w-[88px] shrink-0 flex-col gap-[5px] pt-1">
      <button className={`flex h-[30px] items-center rounded-[9px] pl-[11px] ${glossy}`}>
        <PadPencil className="-mt-[5px] h-4 w-4" />
        <span className={`${segoe} ml-1 w-[48px] pt-px text-[10px] leading-[13px] tracking-[-0.35px] whitespace-nowrap text-[#c4dce4]`}>IR PARA O<br />BALCÃO</span>
      </button>
      <button className={`flex h-6 items-center rounded-[9px] border border-[#747a7a] bg-[repeating-linear-gradient(180deg,#727979_0px,#727979_2px,#7a8080_2px,#7a8080_3px)] pt-[2px] pl-6 ${segoe} text-[10px] text-[#b8c8cc]`}>
        <Dish className="mr-[5px] h-[15px] w-[15px]" />NFe
      </button>
    </div>
    <Logo />
  </header>
);

const Toolbar = () => (
  <nav className={`flex h-10 shrink-0 items-start pt-[5px] pl-[4px] ${panel}`}>
    <DarkButton className="h-[27px] w-[77px] pl-[10px]" icon={Clipboard} label="Incluir" muted textClass="pl-[3px]" />
    <DarkButton className="ml-[3px] h-[27px] w-[77px] pl-[2px]" icon={Ban} label="Cancelar" textClass="pl-[3px] tracking-[-0.2px]" />
    <DarkButton className="ml-[11px] h-[27px] w-[82px] pl-[7px]" icon={Bag} label="Produto" textClass="pl-[3px] tracking-[-0.1px]" />
    <DarkButton className="ml-[3px] h-[27px] w-[82px] pl-[7px]" icon={Wrench} label="Serviço" textClass="pl-[3px] tracking-[-0.1px]" />
    <DarkButton className="ml-[2px] h-[27px] w-[96px] pl-px" icon={ListWin} label="Conta/Custo" textClass="pl-[2px]" />
    <DarkButton className="ml-[2px] h-[27px] w-[105px] pl-[2px]" icon={Tools} label="Prest. Serviço" textClass="pl-[3px] tracking-[-0.25px]" />
    <DarkButton className="ml-[2px] h-[27px] w-[87px] pl-[12px]" icon={Drive} label="Pedido" textClass="pl-[3px] tracking-[-0.3px]" />
    <DarkButton className="ml-[2px] h-[27px] w-[87px] pl-px" icon={DocPencil} label="Orçamento" textClass="pl-px tracking-[-0.2px]" />
  </nav>
);

const TitleButton = ({ close }: { close?: boolean }) => (
  <svg viewBox="0 0 13 13" className="h-[13px] w-[13px]">
    <circle cx="6.500" cy="6.500" r="5.500" fill="#c6c6c6" stroke="#555" />
    {close ? <path d="M4 4l5 5M9 4l-5 5" stroke="#222" strokeWidth="1.600" /> : <path d="M3.500 6.500h6" stroke="#222" strokeWidth="1.800" />}
  </svg>
);

export default function App() {
  return (
    <div className="flex h-[742px] w-[1016px] flex-col overflow-hidden bg-[#5c6b78] text-black">
      <Defs />
      <main className={`flex h-[738px] w-[1016px] shrink-0 flex-col rounded-t-[8px] border-r-2 border-l-2 border-t-2 border-t-[#8c8c8c] border-r-[#555] border-l-[#8a8a8a] ${brushed}`}>
        <div className="flex h-6 shrink-0 items-center pr-1 pb-[3px] pl-[3px]">
          <Register className="h-4 w-4" />
          <h1 className={`${arial} ml-1 flex-1 text-[12px] leading-4 font-bold tracking-[-0.15px]`}>Faturamento</h1>
          <div className="flex gap-[6px]"><TitleButton /><TitleButton close /></div>
        </div>
        <Header />
        <div className="flex gap-[6px] pt-2 pl-[10px]">
          <LeftColumn />
          <div className="flex w-[728px] flex-col gap-2">
            <Toolbar />
            <section className={`flex h-[580px] flex-col items-start gap-[5px] pt-[5px] pl-[7px] ${panel}`}>
              <Inset className="flex h-[456px] w-[711px] shrink-0 flex-col bg-[#f4f4f4]">
                <UpperForm />
                <div className="mt-[7px] ml-[3px] h-[285px] w-[701px] border-t-2 border-r border-b border-l-2 border-[#808080] border-r-[#c4c4c4] border-b-[#c4c4c4] pt-px pl-[3px]">
                  <div className="h-[220px] w-[693px] bg-white"><Items /></div>
                  <TableFooter />
                </div>
              </Inset>
              <Totals />
            </section>
          </div>
        </div>
      </main>
      <div className="flex h-1 shrink-0 gap-[3px] border-t border-[#222] bg-[#64788c] pl-5">
        <i className="h-1 w-[42px] bg-[#aab4be]" /><i className="h-1 w-[34px] bg-[#f0e490]" /><i className="ml-2 h-1 w-[42px] bg-[#aab4be]" /><i className="h-1 w-[43px] bg-[#aab4be]" /><i className="h-1 w-[43px] bg-[#aab4be]" /><i className="h-1 w-[43px] bg-[#aab4be]" /><i className="h-1 w-[42px] bg-[#dfe4e8]" />
      </div>
    </div>
  );
}
